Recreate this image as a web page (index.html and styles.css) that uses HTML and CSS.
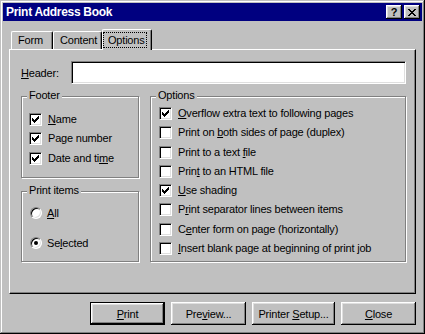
FILE: index.html
```html
<!DOCTYPE html>
<html lang="en">
<head>
    <meta charset="UTF-8">
    <meta name="viewport" content="width=device-width, initial-scale=1.0">
    <title>Print Address Book</title>
    <link rel="stylesheet" href="styles.css">
</head>
<body>
    <div class="window">
        <div class="titlebar">
            <span class="title">Print Address Book</span>
            <div class="caption-btns">
                <button class="caption-btn">?</button>
                <button class="caption-btn">
                    <svg width="8" height="7" viewBox="0 0 8 7" shape-rendering="crispEdges">
                        <path d="M0 0h2v1H0z M6 0h2v1H6z M1 1h2v1H1z M5 1h2v1H5z M2 2h4v1H2z M3 3h2v1H3z M2 4h4v1H2z M1 5h2v1H1z M5 5h2v1H5z M0 6h2v1H0z M6 6h2v1H6z" fill="#000"/>
                    </svg>
                </button>
            </div>
        </div>

        <div class="dialog">
            <!-- tabs -->
            <div class="tabs">
                <div class="tab tab-form">Form</div>
                <div class="tab tab-content">Content</div>
                <div class="tab active"><span class="focus">Options</span></div>
            </div>

            <div class="panel">
                <div class="header-row">
                    <label><u>H</u>eader:</label>
                    <div class="textbox"></div>
                </div>

                <div class="groups">
                    <div class="left-col">
                        <div class="group group-footer">
                            <span class="group-label">Footer</span>
                            <div class="checklist">
                                <div class="check"><span class="box"><svg class="tick" width="7" height="7" viewBox="0 0 7 7" shape-rendering="crispEdges"><path d="M0 2h1v3H0z M1 3h1v3H1z M2 4h1v3H2z M3 3h1v3H3z M4 2h1v3H4z M5 1h1v3H5z M6 0h1v3H6z" fill="#000"/></svg></span><span><u>N</u>ame</span></div>
                                <div class="check"><span class="box"><svg class="tick" width="7" height="7" viewBox="0 0 7 7" shape-rendering="crispEdges"><path d="M0 2h1v3H0z M1 3h1v3H1z M2 4h1v3H2z M3 3h1v3H3z M4 2h1v3H4z M5 1h1v3H5z M6 0h1v3H6z" fill="#000"/></svg></span><span>Page number</span></div>
                                <div class="check"><span class="box"><svg class="tick" width="7" height="7" viewBox="0 0 7 7" shape-rendering="crispEdges"><path d="M0 2h1v3H0z M1 3h1v3H1z M2 4h1v3H2z M3 3h1v3H3z M4 2h1v3H4z M5 1h1v3H5z M6 0h1v3H6z" fill="#000"/></svg></span><span>Date and ti<u>m</u>e</span></div>
                            </div>
                        </div>

                        <div class="group group-print">
                            <span class="group-label">Print items</span>
                            <div class="radio-list">
                                <div class="radio"><span class="dot"></span><span><u>A</u>ll</span></div>
                                <div class="radio on"><span class="dot"></span><span>Se<u>l</u>ected</span></div>
                            </div>
                        </div>
                    </div>

                    <div class="group group-options">
                        <span class="group-label">Options</span>
                        <div class="checklist">
                            <div class="check"><span class="box"><svg class="tick" width="7" height="7" viewBox="0 0 7 7" shape-rendering="crispEdges"><path d="M0 2h1v3H0z M1 3h1v3H1z M2 4h1v3H2z M3 3h1v3H3z M4 2h1v3H4z M5 1h1v3H5z M6 0h1v3H6z" fill="#000"/></svg></span><span><u>O</u>verflow extra text to following pages</span></div>
                            <div class="check"><span class="box"></span><span>Print on <u>b</u>oth sides of page (duplex)</span></div>
                            <div class="check"><span class="box"></span><span>Print to a text <u>f</u>ile</span></div>
                            <div class="check"><span class="box"></span><span>Prin<u>t</u> to an HTML file</span></div>
                            <div class="check"><span class="box"><svg class="tick" width="7" height="7" viewBox="0 0 7 7" shape-rendering="crispEdges"><path d="M0 2h1v3H0z M1 3h1v3H1z M2 4h1v3H2z M3 3h1v3H3z M4 2h1v3H4z M5 1h1v3H5z M6 0h1v3H6z" fill="#000"/></svg></span><span><u>U</u>se shading</span></div>
                            <div class="check"><span class="box"></span><span>P<u>r</u>int separator lines between items</span></div>
                            <div class="check"><span class="box"></span><span>C<u>e</u>nter form on page (horizontally)</span></div>
                            <div class="check"><span class="box"></span><span><u>I</u>nsert blank page at beginning of print job</span></div>
                        </div>
                    </div>
                </div>
            </div>

            <div class="buttons">
                <button class="btn btn-default"><u>P</u>rint</button>
                <button class="btn">Pre<u>v</u>iew...</button>
                <button class="btn btn-wide">Printer <u>S</u>etup...</button>
                <button class="btn"><u>C</u>lose</button>
            </div>
        </div>
    </div>
</body>
</html>
```

FILE: styles.css
```css
* {
    box-sizing: border-box;
}

body {
    margin: 0;
    font-family: "Liberation Sans", Arial, sans-serif;
    font-size: 11px;
    letter-spacing: -0.2px;
    color: #000;
}

.window {
    width: 425px;
    height: 334px;
    padding: 3px;
    background: #c0c0c0;
    box-shadow: inset -1px -1px #000, inset 1px 1px #c0c0c0, inset -2px -2px #808080, inset 2px 2px #fff;
    display: flex;
    flex-direction: column;
}

/* title bar */
.titlebar {
    height: 18px;
    flex: none;
    background: #000080;
    color: #fff;
    display: flex;
    align-items: center;
    padding: 0 2px 0 3px;
}

.title {
    font-weight: bold;
    font-size: 12px;
    letter-spacing: -0.3px;
}

.caption-btns {
    margin-left: auto;
    display: flex;
    gap: 2px;
}

.caption-btn {
    width: 16px;
    height: 14px;
    padding: 0;
    border: 0;
    background: #c0c0c0;
    box-shadow: inset -1px -1px #000, inset 1px 1px #fff, inset -2px -2px #808080, inset 2px 2px #dfdfdf;
    display: flex;
    align-items: center;
    justify-content: center;
    font: bold 11px "Liberation Sans", Arial, sans-serif;
    color: #000;
}

/* dialog body */
.dialog {
    flex: 1;
    display: flex;
    flex-direction: column;
    padding: 8px 6px 6px;
}

.tabs {
    display: flex;
    align-items: flex-end;
    height: 20px;
    flex: none;
    padding-left: 2px;
}

.tab {
    height: 18px;
    padding: 2px 0 0 6px;
    line-height: 13px;
    border-top: 1px solid #fff;
    border-left: 1px solid #fff;
    border-right: 1px solid #000;
    border-radius: 2px 2px 0 0;
    box-shadow: inset -1px 0 #808080;
}

.tab-form {
    width: 42px;
}

.tab-content {
    width: 49px;
}

.tab.active {
    width: 50px;
    height: 21px;
    margin-bottom: -1px;
    padding: 2px 0 0 0;
    position: relative;
    z-index: 1;
    background: #c0c0c0;
}

.focus {
    display: block;
    width: 44px;
    height: 16px;
    padding-left: 4px;
    line-height: 14px;
    border: 1px dotted #000;
}

.panel {
    height: 245px;
    flex: none;
    border-top: 1px solid #fff;
    border-left: 1px solid #fff;
    border-right: 1px solid #000;
    border-bottom: 1px solid #000;
    box-shadow: inset -1px -1px #808080;
    padding: 11px 9px 0 11px;
}

.header-row {
    display: flex;
    align-items: center;
    height: 23px;
}

.header-row label {
    width: 50px;
}

.textbox {
    width: 335px;
    height: 23px;
    background: #fff;
    border: 1px solid;
    border-color: #808080 #fff #fff #808080;
    box-shadow: inset 1px 1px #000, inset -1px -1px #dfdfdf;
}

.groups {
    display: flex;
    gap: 11px;
    margin-top: 12px;
}

.left-col {
    display: flex;
    flex-direction: column;
    gap: 13px;
    width: 118px;
}

.group {
    position: relative;
    border: 1px solid #808080;
    box-shadow: inset 1px 1px #fff, 1px 1px #fff;
}

.group-label {
    position: absolute;
    top: -8px;
    left: 5px;
    padding: 0 2px;
    line-height: 13px;
    background: #c0c0c0;
}

.group-footer {
    height: 82px;
    padding: 16px 0 0 7px;
}

.group-print {
    height: 71px;
    padding: 15px 0 0 8px;
}

.group-options {
    width: 256px;
    height: 166px;
    padding: 10px 0 0 8px;
}

.checklist {
    display: flex;
    flex-direction: column;
    gap: 6.3px;
}

.check {
    display: flex;
    align-items: center;
    gap: 6px;
    height: 13px;
    line-height: 13px;
    white-space: nowrap;
}

.box {
    width: 13px;
    height: 13px;
    flex: none;
    background: #fff;
    border: 1px solid;
    border-color: #808080 #fff #fff #808080;
    box-shadow: inset 1px 1px #000, inset -1px -1px #dfdfdf;
    display: flex;
    align-items: center;
    justify-content: center;
}

.radio-list {
    display: flex;
    flex-direction: column;
    gap: 18px;
}

.radio {
    display: flex;
    align-items: center;
    gap: 5px;
    height: 12px;
    line-height: 13px;
}

.dot {
    width: 12px;
    height: 12px;
    flex: none;
    border-radius: 50%;
    background: #fff;
    border: 1px solid;
    border-color: #808080 #fff #fff #808080;
    box-shadow: inset 1px 1px #000, inset -1px -1px #dfdfdf;
    display: flex;
    align-items: center;
    justify-content: center;
}

.radio.on .dot::after {
    content: "";
    width: 4px;
    height: 4px;
    border-radius: 50%;
    background: #000;
}

/* bottom buttons */
.buttons {
    display: flex;
    justify-content: flex-end;
    gap: 6px;
    margin-top: 8px;
    height: 23px;
    flex: none;
}

.btn {
    width: 75px;
    height: 23px;
    padding: 0;
    border: 0;
    font: inherit;
    letter-spacing: inherit;
    color: #000;
    background: #c0c0c0;
    box-shadow: inset -1px -1px #000, inset 1px 1px #fff, inset -2px -2px #808080, inset 2px 2px #dfdfdf;
}

.btn-wide {
    width: 83px;
}

.btn-default {
    border: 1px solid #000;
}
```
